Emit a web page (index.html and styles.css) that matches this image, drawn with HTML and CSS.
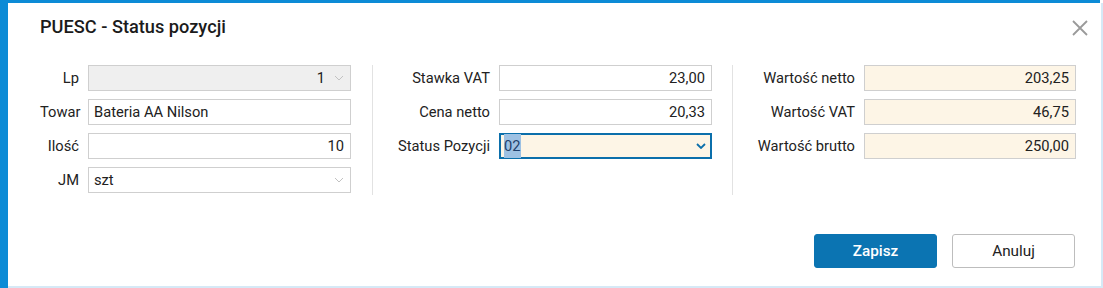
FILE: index.html
```html
<!DOCTYPE html>
<html lang="pl">
    <head>
        <meta charset="UTF-8" />
        <meta name="viewport" content="width=device-width, initial-scale=1.0" />
        <title>PUESC - Status pozycji</title>
        <link rel="stylesheet" href="styles.css">
    </head>
    <body>
        <div class="screen">
            <div class="dialog">
                <div class="dialog-header">
                    <h1 class="dialog-title">PUESC - Status pozycji</h1>
                    <button class="close-btn" type="button" aria-label="Zamknij">
                        <svg width="18" height="18" viewBox="0 0 18 18">
                            <path d="M2 2 L16 16 M16 2 L2 16" stroke="#9a9a9a" stroke-width="1.8" fill="none" />
                        </svg>
                    </button>
                </div>
                <div class="dialog-body">
                    <div class="section section-1">
                        <label class="field-label">Lp</label>
                        <div class="field field-disabled field-right">
                            <span class="field-value">1</span>
                            <svg class="chevron" width="10" height="6" viewBox="0 0 10 6"><path d="M1 1 L5 5 L9 1" stroke="#c2c2c2" stroke-width="1" fill="none" /></svg>
                        </div>
                        <label class="field-label">Towar</label>
                        <div class="field">
                            <span class="field-value">Bateria AA Nilson</span>
                        </div>
                        <label class="field-label">Ilość</label>
                        <div class="field field-right">
                            <span class="field-value">10</span>
                        </div>
                        <label class="field-label">JM</label>
                        <div class="field">
                            <span class="field-value">szt</span>
                            <svg class="chevron" width="10" height="6" viewBox="0 0 10 6"><path d="M1 1 L5 5 L9 1" stroke="#c2c2c2" stroke-width="1" fill="none" /></svg>
                        </div>
                    </div>
                    <div class="section section-2">
                        <label class="field-label">Stawka VAT</label>
                        <div class="field field-right">
                            <span class="field-value">23,00</span>
                        </div>
                        <label class="field-label">Cena netto</label>
                        <div class="field field-right">
                            <span class="field-value">20,33</span>
                        </div>
                        <label class="field-label">Status Pozycji</label>
                        <div class="field field-focus">
                            <span class="field-value"><span class="selected">02</span></span>
                            <svg class="chevron" width="10" height="6" viewBox="0 0 10 6"><path d="M1 1 L5 5 L9 1" stroke="#0b6fab" stroke-width="1.8" fill="none" /></svg>
                        </div>
                    </div>
                    <div class="section section-3">
                        <label class="field-label">Wartość netto</label>
                        <div class="field field-calc field-right">
                            <span class="field-value">203,25</span>
                        </div>
                        <label class="field-label">Wartość VAT</label>
                        <div class="field field-calc field-right">
                            <span class="field-value">46,75</span>
                        </div>
                        <label class="field-label">Wartość brutto</label>
                        <div class="field field-calc field-right">
                            <span class="field-value">250,00</span>
                        </div>
                    </div>
                </div>
                <div class="dialog-footer">
                    <button class="btn btn-primary" type="button">Zapisz</button>
                    <button class="btn btn-default" type="button">Anuluj</button>
                </div>
            </div>
        </div>
    </body>
</html>
```

FILE: styles.css
```css
html,
body {
    margin: 0;
    padding: 0;
    font-family: Roboto, 'Liberation Sans', sans-serif;
    color: #212121;
    background: #ffffff;
}
.screen {
    height: 288px;
    box-sizing: border-box;
    padding: 3px 0 0 8px;
    background: linear-gradient(#0c8bd6, #0c8bd6) left top / 8px 100% no-repeat,
        linear-gradient(#0c8bd6, #0c8bd6) left top / 1100px 3px no-repeat,
        #ffffff;
}
.dialog {
    width: 1095px;
    height: 285px;
    box-sizing: border-box;
    background: #ffffff;
    border-top-left-radius: 6px;
    border-right: 2px solid #d6e9f6;
    border-bottom: 2px solid #d6e9f6;
    display: flex;
    flex-direction: column;
}
.dialog-header {
    display: flex;
    align-items: center;
    justify-content: space-between;
    padding: 13px 12px 0 32px;
    height: 21px;
}
.dialog-title {
    margin: 0;
    font-size: 18.2px;
    font-weight: 500;
    line-height: 21px;
    color: #1b1b1b;
}
.close-btn {
    border: none;
    background: none;
    padding: 0;
    margin-top: 2px;
    width: 18px;
    height: 18px;
    display: flex;
}
.dialog-body {
    display: flex;
    margin-top: 28px;
    padding-left: 32px;
    height: 130px;
}
.section {
    display: grid;
    grid-auto-rows: 26px;
    row-gap: 8px;
    column-gap: 9px;
    align-content: start;
}
.section-1 {
    grid-template-columns: 39px 263px;
    padding-right: 21px;
    border-right: 1px solid #e2e2e2;
}
.section-2 {
    grid-template-columns: 94px 213px;
    padding-left: 23px;
    padding-right: 20px;
    border-right: 1px solid #e2e2e2;
}
.section-3 {
    grid-template-columns: 99px 212px;
    padding-left: 23px;
}
.field-label {
    font-size: 14.7px;
    text-align: right;
    line-height: 26px;
    white-space: nowrap;
    color: #222222;
}
.field {
    display: flex;
    align-items: center;
    box-sizing: border-box;
    border: 1px solid #cfcfcf;
    background: #ffffff;
    padding: 0 6px 0 5px;
    font-size: 14.7px;
    gap: 9px;
}
.field-value {
    flex: 1;
    white-space: nowrap;
}
.field-right .field-value {
    text-align: right;
}
.field-disabled {
    background: #efefef;
}
.field-calc {
    background: #fdf5e6;
}
.field-focus {
    border: 2px solid #0b6fab;
    background: #fdf5e6;
    padding: 0 4px 0 3px;
}
.selected {
    background: #9ec1e3;
    color: #1f3f6b;
    padding: 3px 0;
}
.chevron {
    flex: none;
}
.dialog-footer {
    display: flex;
    justify-content: flex-end;
    gap: 15px;
    margin-top: 39px;
    padding-right: 26px;
}
.btn {
    width: 123px;
    height: 34px;
    border-radius: 3px;
    font-family: Roboto, 'Liberation Sans', sans-serif;
    font-size: 15.3px;
    cursor: pointer;
}
.btn-primary {
    background: #0b74b2;
    border: 1px solid #0b74b2;
    color: #ffffff;
    font-weight: 500;
}
.btn-default {
    background: #ffffff;
    border: 1px solid #bdbdbd;
    color: #222222;
}
```
